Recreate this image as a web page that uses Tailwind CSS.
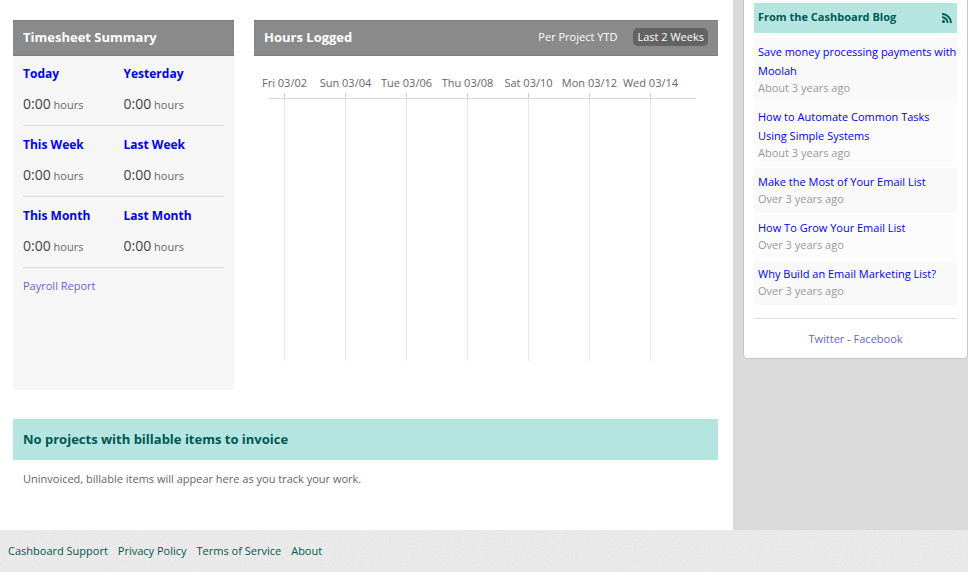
<!DOCTYPE html>
<html lang="en">

<head>
    <meta charset="UTF-8">
    <meta name="viewport" content="width=device-width, initial-scale=1.0">
    <title>Cashboard</title>
    <script src="https://cdn.jsdelivr.net/npm/@tailwindcss/browser@4"></script>
</head>

<body class="min-h-screen flex flex-col bg-[#dadada] font-['Open_Sans','Noto_Sans',sans-serif] text-[11px] leading-5 text-[#666]">
    <div class="flex">
        <main class="flex-1 min-w-0 bg-white pt-5 pl-[13px] pr-[15px] pb-10">
            <div class="flex gap-5">
                <section class="w-[221px] shrink-0 min-h-[370px] bg-[#f6f6f6]">
                    <h2 class="h-9 px-[10px] pb-[2px] flex items-center bg-[#8a8a8a] border-y border-[#7c7c7c] text-[13px] font-bold text-white">Timesheet Summary</h2>
                    <div class="px-[10px] flex flex-col gap-px">
                        <div class="grid grid-cols-2 pt-2 pb-[10px] border-b border-[#dcdcdc]">
                            <div>
                                <h3 class="text-xs leading-5 font-bold"><a href="#" class="text-[#0000f4]">Today</a></h3>
                                <p class="mt-[10px]"><span class="text-sm leading-5 text-[#444]">0:00</span> hours</p>
                            </div>
                            <div>
                                <h3 class="text-xs leading-5 font-bold"><a href="#" class="text-[#0000f4]">Yesterday</a></h3>
                                <p class="mt-[10px]"><span class="text-sm leading-5 text-[#444]">0:00</span> hours</p>
                            </div>
                        </div>
                        <div class="grid grid-cols-2 pt-2 pb-[10px] border-b border-[#dcdcdc]">
                            <div>
                                <h3 class="text-xs leading-5 font-bold"><a href="#" class="text-[#0000f4]">This Week</a></h3>
                                <p class="mt-[10px]"><span class="text-sm leading-5 text-[#444]">0:00</span> hours</p>
                            </div>
                            <div>
                                <h3 class="text-xs leading-5 font-bold"><a href="#" class="text-[#0000f4]">Last Week</a></h3>
                                <p class="mt-[10px]"><span class="text-sm leading-5 text-[#444]">0:00</span> hours</p>
                            </div>
                        </div>
                        <div class="grid grid-cols-2 pt-2 pb-[10px] border-b border-[#dcdcdc]">
                            <div>
                                <h3 class="text-xs leading-5 font-bold"><a href="#" class="text-[#0000f4]">This Month</a></h3>
                                <p class="mt-[10px]"><span class="text-sm leading-5 text-[#444]">0:00</span> hours</p>
                            </div>
                            <div>
                                <h3 class="text-xs leading-5 font-bold"><a href="#" class="text-[#0000f4]">Last Month</a></h3>
                                <p class="mt-[10px]"><span class="text-sm leading-5 text-[#444]">0:00</span> hours</p>
                            </div>
                        </div>
                        <p class="pt-[7px]"><a href="#" class="text-[#6666cc]">Payroll Report</a></p>
                    </div>
                </section>

                <section class="flex-1 min-w-0">
                    <div class="h-9 px-[10px] pb-[2px] flex items-center bg-[#8a8a8a] border-y border-[#7c7c7c] text-white">
                        <h2 class="flex-1 text-[13px] font-bold">Hours Logged</h2>
                        <div class="flex items-center gap-3">
                            <button class="h-[18px] px-1 leading-4">Per Project YTD</button>
                            <button class="h-[18px] px-1 leading-4 rounded-[5px] bg-[#636363]">Last 2 Weeks</button>
                        </div>
                    </div>

                    <!-- chart: day labels, ticks, axis, grid lines -->
                    <div class="mr-[37px] pt-[17px] grid grid-cols-7 *:flex *:justify-center *:whitespace-nowrap">
                        <div>Fri 03/02</div>
                        <div>Sun 03/04</div>
                        <div>Tue 03/06</div>
                        <div>Thu 03/08</div>
                        <div>Sat 03/10</div>
                        <div>Mon 03/12</div>
                        <div>Wed 03/14</div>
                    </div>
                    <div class="mr-[37px] h-[5px] grid grid-cols-7 justify-items-center *:w-px *:bg-[#d0d0d0]">
                        <i></i><i></i><i></i><i></i><i></i><i></i><i></i>
                    </div>
                    <div class="ml-[15px] mr-[22px] h-px bg-[#d8d8d8]"></div>
                    <div class="mr-[37px] h-[262px] grid grid-cols-7 justify-items-center *:w-px *:bg-[#e8e8e8]">
                        <i></i><i></i><i></i><i></i><i></i><i></i><i></i>
                    </div>
                </section>
            </div>

            <section class="mt-[29px]">
                <h2 class="h-[41px] px-[10px] pb-[2px] flex items-center bg-[#b4e5e0] text-[13px] font-bold text-[#005850]">No projects with billable items to invoice</h2>
                <p class="px-[10px] pt-[9px] pb-[1px]">Uninvoiced, billable items will appear here as you track your work.</p>
            </section>
        </main>

        <aside class="w-[235px] shrink-0 pl-[10px]">
            <div class="bg-white border-x border-b border-[#c8c8c8] rounded-b-[5px] px-[10px] pt-[3px] pb-[9px]">
                <div class="h-[30px] pl-1 pr-[5px] flex items-center justify-between bg-[#b4e5e0] text-[#005850]">
                    <h2 class="pb-[2px] font-bold">From the Cashboard Blog</h2>
                    <a href="#" aria-label="RSS feed">
                        <svg class="w-[10px] h-[10px]" viewBox="0 0 10 10" fill="none" stroke="currentColor" stroke-width="1.9">
                            <circle cx="1.5" cy="8.5" r="1.5" fill="currentColor" stroke="none" />
                            <path d="M0 4.3a5.7 5.7 0 0 1 5.7 5.7" />
                            <path d="M0 1a9 9 0 0 1 9 9" />
                        </svg>
                    </a>
                </div>
                <ul class="mt-[5px] flex flex-col gap-px *:pl-1 *:pt-1 *:pb-[7px] *:odd:bg-[#f9f9f9] *:even:bg-[#fcfcfc]">
                    <li>
                        <a href="#" class="block leading-[19px] text-[#0000f4]">Save money processing payments with Moolah</a>
                        <p class="leading-[15px] text-[#999]">About 3 years ago</p>
                    </li>
                    <li>
                        <a href="#" class="block leading-[19px] text-[#0000f4]">How to Automate Common Tasks Using Simple Systems</a>
                        <p class="leading-[15px] text-[#999]">About 3 years ago</p>
                    </li>
                    <li>
                        <a href="#" class="block leading-[19px] text-[#0000f4]">Make the Most of Your Email List</a>
                        <p class="leading-[15px] text-[#999]">Over 3 years ago</p>
                    </li>
                    <li>
                        <a href="#" class="block leading-[19px] text-[#0000f4]">How To Grow Your Email List</a>
                        <p class="leading-[15px] text-[#999]">Over 3 years ago</p>
                    </li>
                    <li>
                        <a href="#" class="block leading-[19px] text-[#0000f4]">Why Build an Email Marketing List?</a>
                        <p class="leading-[15px] text-[#999]">Over 3 years ago</p>
                    </li>
                </ul>
                <p class="mt-[13px] pt-[10px] border-t border-[#e0e0e0] text-center"><a href="#" class="text-[#6666cc]">Twitter</a> - <a href="#" class="text-[#6666cc]">Facebook</a></p>
            </div>
        </aside>
    </div>

    <footer class="relative flex-1 bg-[#ededed]">
        <!-- paper grain -->
        <svg class="absolute inset-0 w-full h-full opacity-10" aria-hidden="true">
            <filter id="grain">
                <feTurbulence type="fractalNoise" baseFrequency="0.5" numOctaves="2" />
                <feColorMatrix type="matrix" values="1 0 0 0 0.1  0 1 0 0 0.1  0 0 1 0 0.1  0 0 0 0 1" />
            </filter>
            <rect width="100%" height="100%" filter="url(#grain)" />
        </svg>
        <nav class="relative flex gap-[10px] px-2 py-[11px] *:text-[#005850]">
            <a href="#">Cashboard Support</a>
            <a href="#">Privacy Policy</a>
            <a href="#">Terms of Service</a>
            <a href="#">About</a>
        </nav>
    </footer>
</body>

</html>
